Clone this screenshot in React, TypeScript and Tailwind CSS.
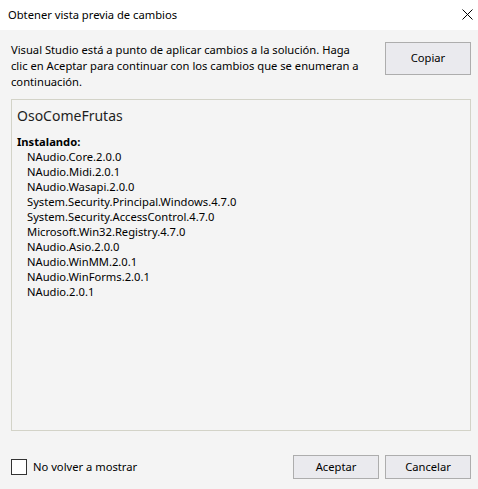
import React from "react";

const packages = [
  "NAudio.Core.2.0.0",
  "NAudio.Midi.2.0.1",
  "NAudio.Wasapi.2.0.0",
  "System.Security.Principal.Windows.4.7.0",
  "System.Security.AccessControl.4.7.0",
  "Microsoft.Win32.Registry.4.7.0",
  "NAudio.Asio.2.0.0",
  "NAudio.WinMM.2.0.1",
  "NAudio.WinForms.2.0.1",
  "NAudio.2.0.1",
];

const font = { fontFamily: '"Noto Sans", "Open Sans", sans-serif' };

const App = () => {
  return (
    <div
      className="w-[478px] h-[489px] bg-[#f4f4f4] flex flex-col text-[11.2px] text-black overflow-hidden"
      style={font}
    >
      {/* title bar */}
      <div className="h-[30px] bg-white flex items-center justify-between pl-[8px] pr-[5px]">
        <span className="leading-[16px]">Obtener vista previa de cambios</span>
        <svg width="11" height="11" viewBox="0 0 11 11" className="mb-[1px]">
          <path d="M0.5 0.5 L10.5 10.5 M10.5 0.5 L0.5 10.5" stroke="#000" strokeWidth="1" />
        </svg>
      </div>

      <div className="flex flex-col pl-[11px] pr-[7px] flex-1">
        {/* message + copy */}
        <div className="h-[57px] mt-[12px] flex items-start justify-between">
          <p className="leading-[16px] w-[360px] whitespace-nowrap">
            Visual Studio está a punto de aplicar cambios a la solución. Haga
            <br />
            clic en Aceptar para continuar con los cambios que se enumeran a
            <br />
            continuación.
          </p>
          <button className="w-[86px] h-[33px] bg-[#eaeaee] border border-[#adadad]">
            Copiar
          </button>
        </div>

        {/* changes panel */}
        <div className="h-[332px] border border-[#d3d3c8] pt-[6px] pl-[5px]">
          <div className="text-[14px] leading-[20px] text-[#1e1e1e]">OsoComeFrutas</div>
          <div className="mt-[8px] font-bold leading-[15px]">Instalando:</div>
          <ul className="pl-[10px]">
            {packages.map((p, i) => (
              <li key={i} className="leading-[15px]">
                {p}
              </li>
            ))}
          </ul>
        </div>

        {/* footer */}
        <div className="mt-[24px] flex items-center justify-between">
          <label className="flex items-center gap-[6px]">
            <span className="w-[16px] h-[16px] border border-[#333] bg-white block" />
            <span>No volver a mostrar</span>
          </label>
          <div className="flex gap-[6px]">
            <button className="w-[86px] h-[24px] bg-[#eaeaee] border border-[#adadad] leading-[20px]">
              Aceptar
            </button>
            <button className="w-[86px] h-[24px] bg-[#eaeaee] border border-[#adadad] leading-[20px]">
              Cancelar
            </button>
          </div>
        </div>
      </div>
    </div>
  );
};

export default App;
